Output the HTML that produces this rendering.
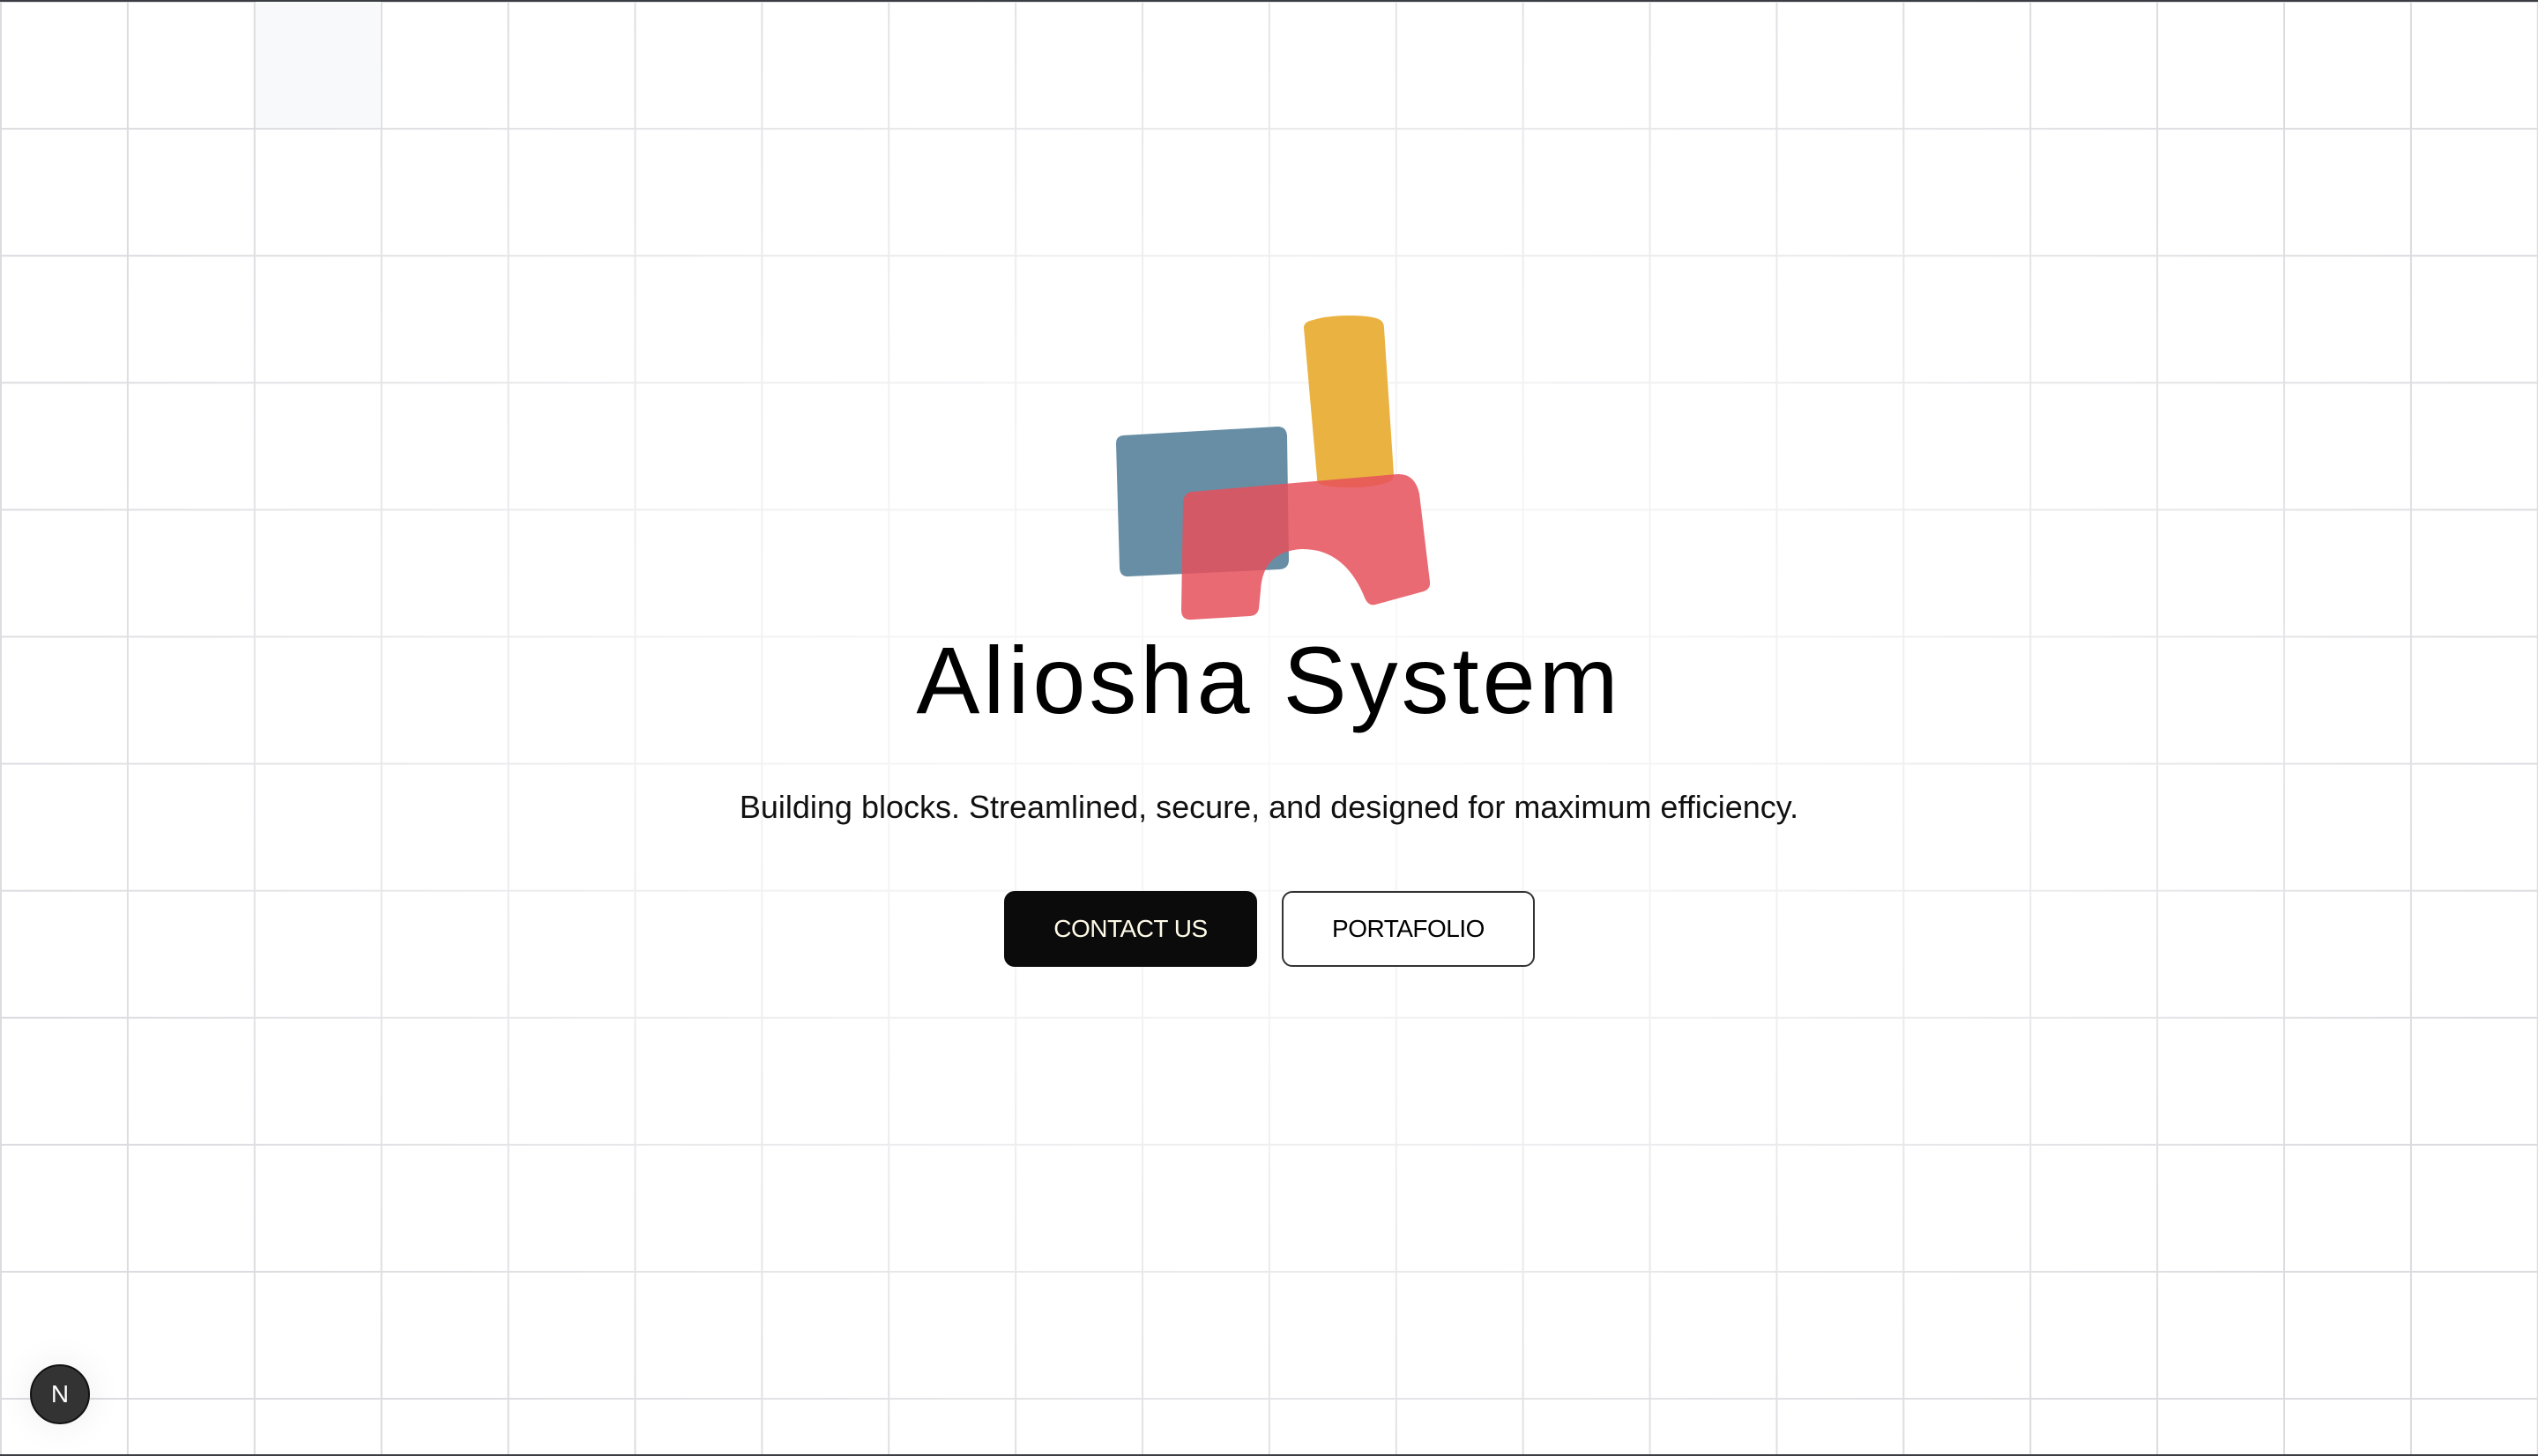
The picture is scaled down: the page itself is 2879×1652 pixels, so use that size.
<!DOCTYPE html>
<html><head><meta charset="utf-8"><style>
html,body{margin:0;padding:0;width:2879px;height:1652px;overflow:hidden;background:#fff;font-family:"Liberation Sans",sans-serif}
.grid{position:absolute;left:0;top:0;width:2879px;height:1652px;
background-image:linear-gradient(to right,#dcdce0 0,#dcdce0 2px,transparent 2px),linear-gradient(to bottom,#dcdce0 0,#dcdce0 2px,transparent 2px);
background-size:143.9px 144.1px;background-position:0 1px}
.fade{position:absolute;left:0;top:0;width:2879px;height:1652px;background:radial-gradient(ellipse 1500px 1000px at 1440px 800px,rgba(255,255,255,0.85) 0%,rgba(255,255,255,0.6) 45%,rgba(255,255,255,0) 100%)}
.cell{position:absolute;left:290px;top:2px;width:142px;height:143px;background:#f8f9fb}
.topline{position:absolute;left:0;top:0;width:2879px;height:2px;background:#3a3d42}
.botline{position:absolute;left:0;top:1650px;width:2879px;height:2px;background:#3a3d42}
h1{position:absolute;left:0;width:2879px;top:702px;margin:0;text-align:center;font-size:108px;font-weight:normal;color:#000;line-height:140px;letter-spacing:4px}
.sub{position:absolute;left:0;width:2879px;top:891px;text-align:center;font-size:36px;line-height:50px;color:#111}
.btn{position:absolute;top:1011px;width:287px;height:86px;border-radius:12px;box-sizing:border-box;display:flex;align-items:center;justify-content:center;font-size:28px;letter-spacing:-0.5px}
.b1{left:1139px;background:#0b0b0b;color:#fffbe8}
.b2{left:1454px;background:#fff;border:2px solid #333;color:#000}
.nb{position:absolute;left:34px;top:1548px;width:68px;height:68px;border-radius:50%;background:#333;border:2px solid #111;box-sizing:border-box;color:#fff;font-size:28px;display:flex;align-items:center;justify-content:center;box-shadow:0 0 40px rgba(0,0,0,0.08)}
</style></head><body>
<div class="grid"></div>
<div class="fade"></div>
<div class="cell"></div>
<div class="topline"></div>
<div class="botline"></div>
<svg style="position:absolute;left:0;top:0" width="2879" height="1652">
<path d="M1274,494 L1449,484 Q1459,484 1460,494 L1462,635 Q1462,645 1452,646 L1281,654 Q1271,655 1270,645 L1266,503 Q1266,495 1274,494 Z" fill="#688ea5"/>
<path d="M1479,372 Q1479,366 1486,364 Q1505,358 1530,358 Q1560,358 1567,364 Q1570,367 1570,372 L1581,538 Q1581,545 1575,547 Q1555,554 1525,553 Q1500,552 1495,548 Q1494,546 1494,542 Z" fill="#eab240"/>
<path d="M1352,558 L1585,538 Q1605,537 1610,560 L1622,660 Q1623,668 1615,671 L1560,686 Q1552,688 1548,678 Q1525,622 1476,623 Q1432,626 1430,670 L1428,690 Q1427,698 1418,699 L1352,703 Q1340,704 1340,692 L1342,570 Q1343,559 1352,558 Z" fill="#e6505a" fill-opacity="0.85"/>
</svg>
<h1>Aliosha System</h1>
<div class="sub">Building blocks. Streamlined, secure, and designed for maximum efficiency.</div>
<div class="btn b1">CONTACT US</div>
<div class="btn b2">PORTAFOLIO</div>
<div class="nb">N</div>
</body></html>
